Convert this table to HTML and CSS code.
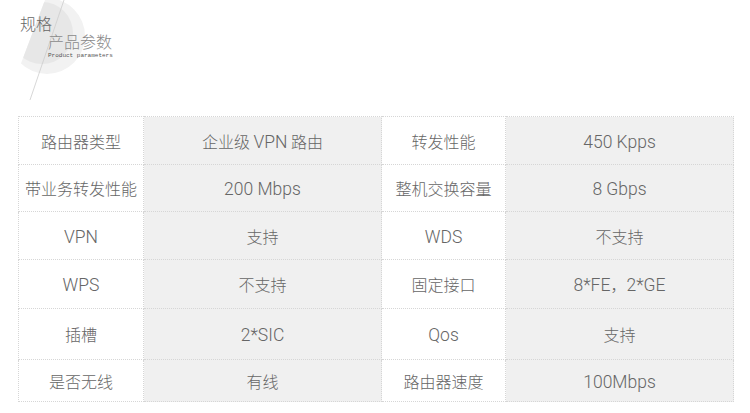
FILE: index.html
```html
<!DOCTYPE html>
<html lang="zh-CN">
<head>
<meta charset="utf-8">
<link rel="stylesheet" href="styles.css">
</head>
<body>
<header class="title">
  <svg class="title-art" width="110" height="110" viewBox="0 0 110 110" aria-hidden="true">
    <defs>
      <clipPath id="dcut"><polygon points="45,-10 110,-10 110,110 10,110 12,90 20,66 45,0"/></clipPath>
    </defs>
    <g clip-path="url(#dcut)">
      <circle cx="47" cy="36" r="38" fill="#f2f2f2"/>
      <circle cx="42" cy="33" r="31" fill="#e7e7e7"/>
    </g>
    <line x1="64" y1="0" x2="30" y2="100" stroke="#cdcdcd" stroke-width="0.8"/>
  </svg>
  <div class="title-main">规格</div>
  <div class="title-sub">
    <div class="title-cn">产品参数</div>
    <div class="title-en">Product parameters</div>
  </div>
</header>
<table class="spec">
  <colgroup>
    <col class="c-label"><col class="c-value"><col class="c-label2"><col class="c-value2">
  </colgroup>
  <tbody>
    <tr><td class="label">路由器类型</td><td class="value">企业级 <span class="en">VPN</span> 路由</td><td class="label">转发性能</td><td class="value"><span class="en">450 Kpps</span></td></tr>
    <tr><td class="label">带业务转发性能</td><td class="value"><span class="en">200 Mbps</span></td><td class="label">整机交换容量</td><td class="value"><span class="en">8 Gbps</span></td></tr>
    <tr><td class="label"><span class="en">VPN</span></td><td class="value">支持</td><td class="label"><span class="en">WDS</span></td><td class="value">不支持</td></tr>
    <tr><td class="label"><span class="en">WPS</span></td><td class="value">不支持</td><td class="label">固定接口</td><td class="value"><span class="en">8*FE</span>，<span class="en">2*GE</span></td></tr>
    <tr><td class="label">插槽</td><td class="value"><span class="en">2*SIC</span></td><td class="label"><span class="en">Qos</span></td><td class="value">支持</td></tr>
    <tr><td class="label">是否无线</td><td class="value">有线</td><td class="label">路由器速度</td><td class="value"><span class="en">100Mbps</span></td></tr>
  </tbody>
</table>
</body>
</html>
```
FILE: styles.css
```css
html, body {
  margin: 0;
  padding: 0;
  background: #fff;
}
body {
  font-family: "Noto Sans CJK SC", sans-serif;
  font-weight: 300;
  color: #555;
}
.title {
  position: relative;
  height: 116px;
  box-sizing: border-box;
  padding: 13px 0 0 20px;
}
.title-art {
  position: absolute;
  left: 0;
  top: 0;
}
.title-main {
  position: relative;
  font-size: 16px;
  line-height: 20px;
  color: #666;
}
.title-sub {
  position: relative;
  margin: 0 0 0 28px;
}
.title-cn {
  font-size: 16px;
  line-height: 16px;
  color: #8a8a8a;
}
.title-en {
  margin-top: 4px;
  font-family: "Liberation Mono", monospace;
  font-weight: 400;
  font-size: 6px;
  line-height: 6px;
  color: #555;
}
.spec {
  margin-left: 18px;
  width: 715px;
  table-layout: fixed;
  border-collapse: collapse;
  font-size: 16px;
}
.c-label { width: 125px; }
.c-value { width: 238px; }
.c-label2 { width: 124px; }
.c-value2 { width: 228px; }
.spec td {
  border: 1px dotted #d6d6d6;
  text-align: center;
  padding: 0;
  white-space: nowrap;
  color: #666;
}
.spec td.value {
  background: #f0f0f0;
}
.spec .en {
  font-family: Roboto, "Liberation Sans", sans-serif;
  font-weight: 300;
  font-size: 17.5px;
  color: #666;
}
.spec tr:nth-child(1) { height: 48px; }
.spec tr:nth-child(2) { height: 47px; }
.spec tr:nth-child(3) { height: 48px; }
.spec tr:nth-child(4) { height: 49px; }
.spec tr:nth-child(5) { height: 51px; }
.spec tr:nth-child(6) { height: 42px; }
```
